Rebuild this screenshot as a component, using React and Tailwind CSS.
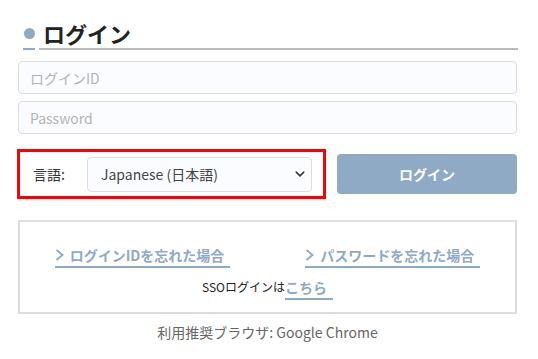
import React from "react";

function ChevronDown() {
  return (
    <svg
      width="10"
      height="10"
      viewBox="0 0 16 16"
      fill="none"
      stroke="#343a40"
      strokeWidth="2.5"
      strokeLinecap="round"
      strokeLinejoin="round"
    >
      <path d="M2 5l6 6 6-6" />
    </svg>
  );
}

function ChevronRight() {
  return (
    <svg
      width="9"
      height="12"
      viewBox="0 0 9 12"
      fill="none"
      stroke="#8eaac4"
      strokeWidth="1.8"
    >
      <path d="M1.5 1l6 5-6 5" />
    </svg>
  );
}

function TextLink({ children, arrow }) {
  return (
    <a
      href="#"
      className="inline-flex items-center gap-[6px] border-b-2 border-[#8eaac4] pb-[1px] pr-[6px] text-[14px] font-bold leading-[20px] text-[#8eaac4]"
    >
      {arrow && <ChevronRight />}
      {children}
    </a>
  );
}

export default function App() {
  return (
    <div className="h-[359px] w-[538px] bg-white pt-[18px] font-['Noto_Sans_CJK_JP','Noto_Sans',sans-serif] text-[#333]">
      <div className="ml-[23px] flex w-[495px] items-stretch">
        <div className="flex w-[12px] items-center justify-center border-b-2 border-[#8eaac4]">
          <span className="block h-[11px] w-[11px] rounded-full bg-[#8eaac4]" />
        </div>
        <div className="ml-[4px] flex-1 border-b-2 border-[#bbbbbb] pl-[4px]">
          <h1 className="text-[22px] font-bold leading-[30px] text-[#222]">
            ログイン
          </h1>
        </div>
      </div>

      <div className="ml-[18px] w-[499px]">
        <input
          type="text"
          placeholder="ログインID"
          className="mt-[11px] block h-[33px] w-full rounded-[4px] border border-[#dddddd] bg-[#fafcff] px-[11px] text-[14px] text-[#333] placeholder:text-[#b4b4b4] outline-none"
        />
        <input
          type="password"
          placeholder="Password"
          className="mt-[7px] block h-[33px] w-full rounded-[4px] border border-[#dddddd] bg-[#fafcff] px-[11px] text-[14px] text-[#333] placeholder:text-[#b4b4b4] outline-none"
        />

        <div className="mt-[15px] flex items-center">
          <div className="-ml-[1px] flex h-[50px] w-[309px] items-center border-[3px] border-[#ff0000] pl-[13px] pr-[11px]">
            <span className="text-[14px] text-[#333]">言語:</span>
            <div className="relative ml-auto">
              <select className="block h-[35px] w-[225px] appearance-none rounded-[4px] border border-[#dddddd] bg-[#fafcff] pl-[13px] text-[14px] text-[#444] outline-none">
                <option>Japanese (日本語)</option>
                <option>English</option>
              </select>
              <span className="pointer-events-none absolute right-[7px] top-[12px]">
                <ChevronDown />
              </span>
            </div>
          </div>
          <button className="ml-auto h-[40px] w-[180px] rounded-[4px] bg-[#8eaac4] text-[14px] font-bold text-white">
            ログイン
          </button>
        </div>

        <div className="mt-[21px] border-2 border-[#dddddd] pb-[12px] pt-[23px]">
          <div className="flex justify-center gap-[75px]">
            <TextLink arrow>ログインIDを忘れた場合</TextLink>
            <TextLink arrow>パスワードを忘れた場合</TextLink>
          </div>
          <div className="mt-[9px] flex items-end justify-center">
            <span className="pb-[3px] text-[12px] leading-[20px] text-[#222]">
              SSOログインは
            </span>
            <TextLink>こちら</TextLink>
          </div>
        </div>

        <p className="mt-[8px] text-center text-[14px] leading-[20px] text-[#666]">
          利用推奨ブラウザ: Google Chrome
        </p>
      </div>
    </div>
  );
}
